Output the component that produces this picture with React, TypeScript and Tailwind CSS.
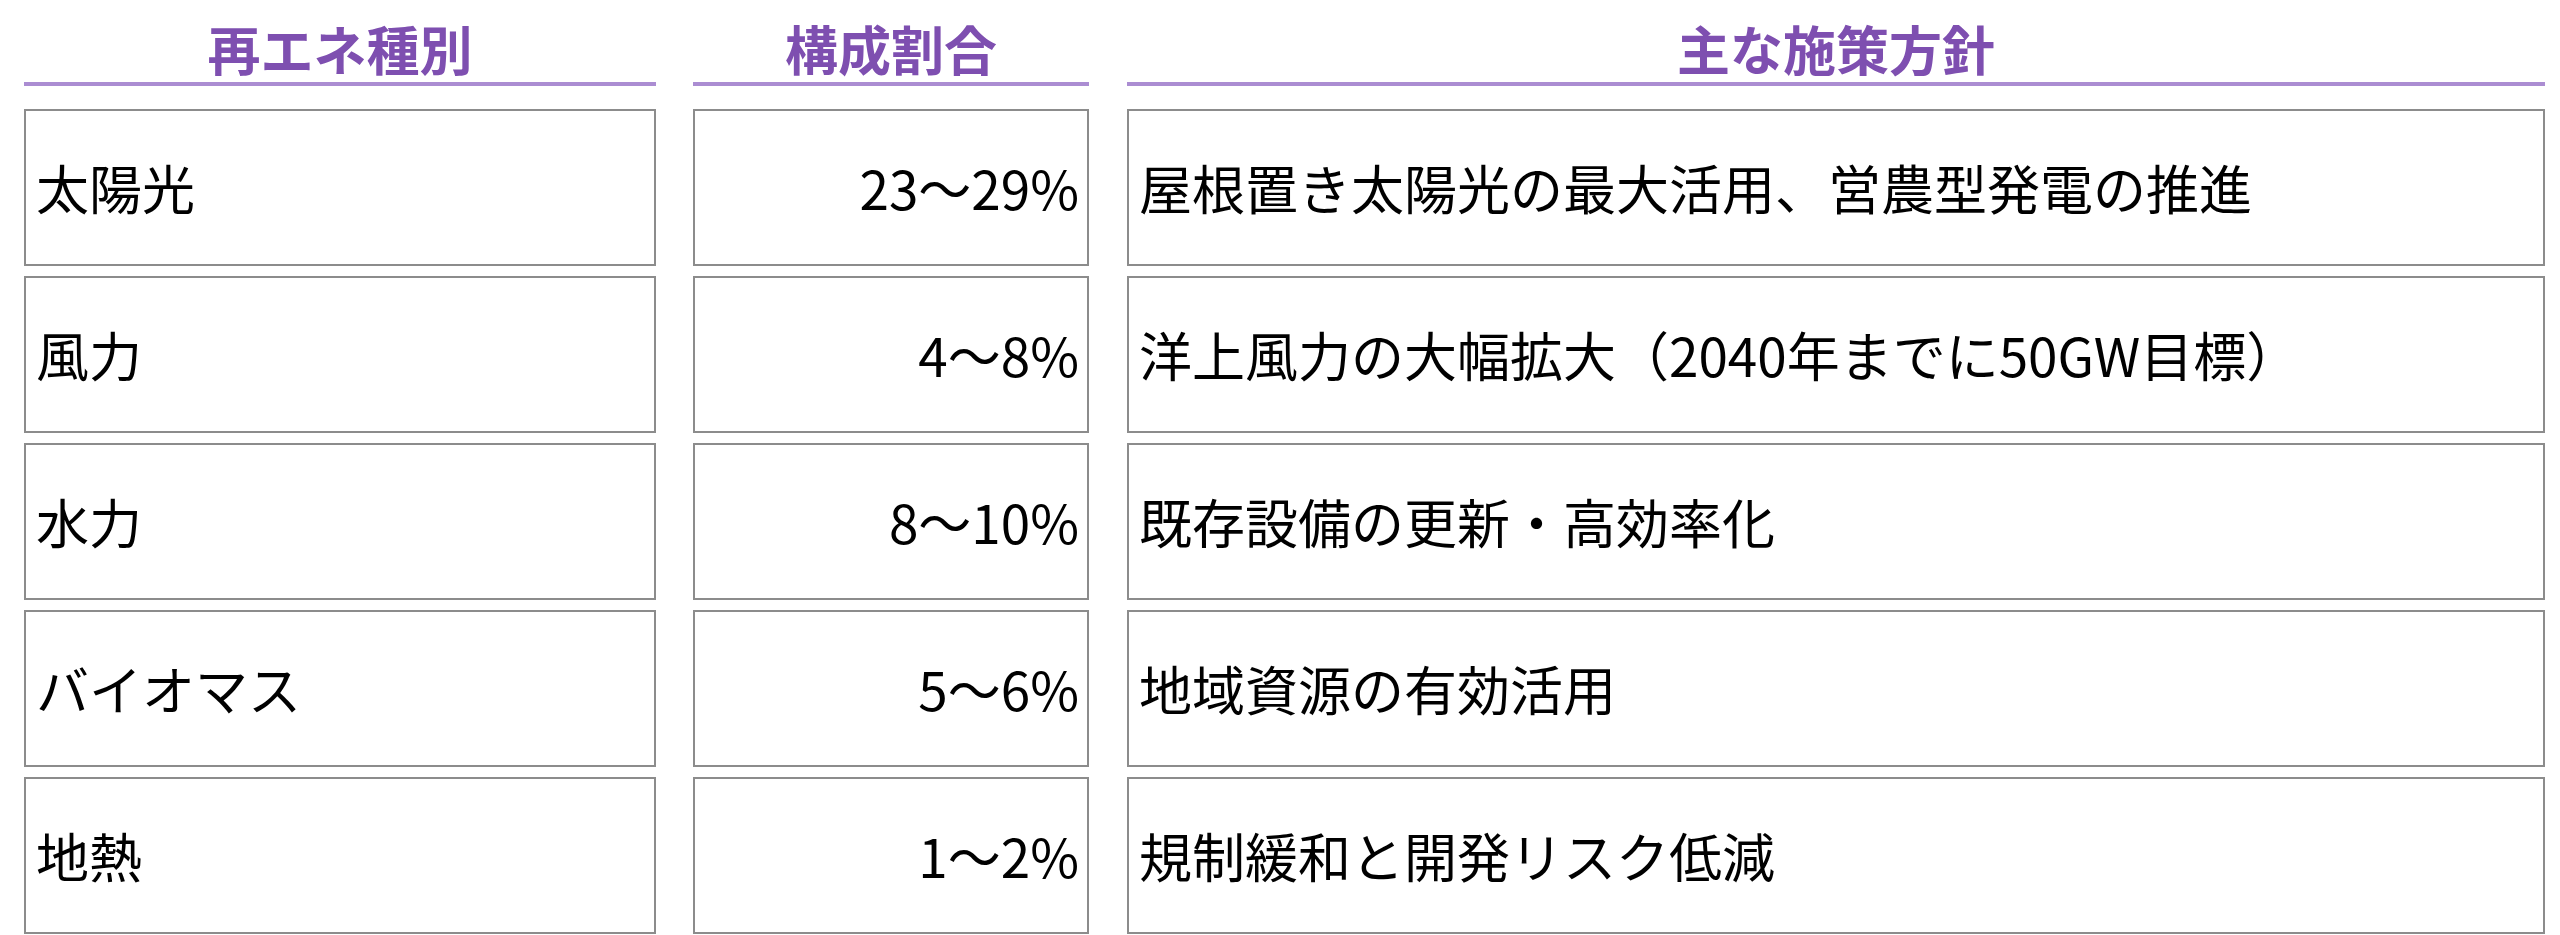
import React from "react";

const rows = [
  { kind: "太陽光", ratio: "23～29%", policy: "屋根置き太陽光の最大活用、営農型発電の推進" },
  { kind: "風力", ratio: "4～8%", policy: "洋上風力の大幅拡大（2040年までに50GW目標）" },
  { kind: "水力", ratio: "8～10%", policy: "既存設備の更新・高効率化" },
  { kind: "バイオマス", ratio: "5～6%", policy: "地域資源の有効活用" },
  { kind: "地熱", ratio: "1～2%", policy: "規制緩和と開発リスク低減" },
];

const font = { fontFamily: '"Noto Sans CJK JP", "Noto Sans", sans-serif' };

function Header({ label }: { label: string }) {
  return (
    <div className="h-[86px] flex items-end justify-center border-b-4 border-[#ab8dd2] pb-[7px]">
      <span className="text-[53px] leading-none font-bold text-[#7e4fb0]">{label}</span>
    </div>
  );
}

function Cell({ text, align }: { text: string; align: "left" | "right" }) {
  return (
    <div
      className={
        "h-[157px] border-2 border-[#8c8c8c] flex items-center " +
        (align === "right" ? "justify-end pr-[8px] pl-[10px]" : "justify-start pl-[10px] pr-[10px]")
      }
    >
      <span className="text-[53px] leading-none text-black whitespace-nowrap">{text}</span>
    </div>
  );
}

export default function App() {
  return (
    <div className="w-[2560px] h-[935px] bg-white overflow-hidden" style={font}>
      <div className="flex pl-[24px] gap-[37px]">
        <div className="w-[632px] flex flex-col">
          <Header label="再エネ種別" />
          <div className="mt-[23px] flex flex-col gap-[10px]">
            {rows.map((r) => (
              <Cell key={r.kind} text={r.kind} align="left" />
            ))}
          </div>
        </div>
        <div className="w-[396px] flex flex-col">
          <Header label="構成割合" />
          <div className="mt-[23px] flex flex-col gap-[10px]">
            {rows.map((r) => (
              <Cell key={r.kind} text={r.ratio} align="right" />
            ))}
          </div>
        </div>
        <div className="w-[1418px] ml-[1px] flex flex-col">
          <Header label="主な施策方針" />
          <div className="mt-[23px] flex flex-col gap-[10px]">
            {rows.map((r) => (
              <Cell key={r.kind} text={r.policy} align="left" />
            ))}
          </div>
        </div>
      </div>
    </div>
  );
}
